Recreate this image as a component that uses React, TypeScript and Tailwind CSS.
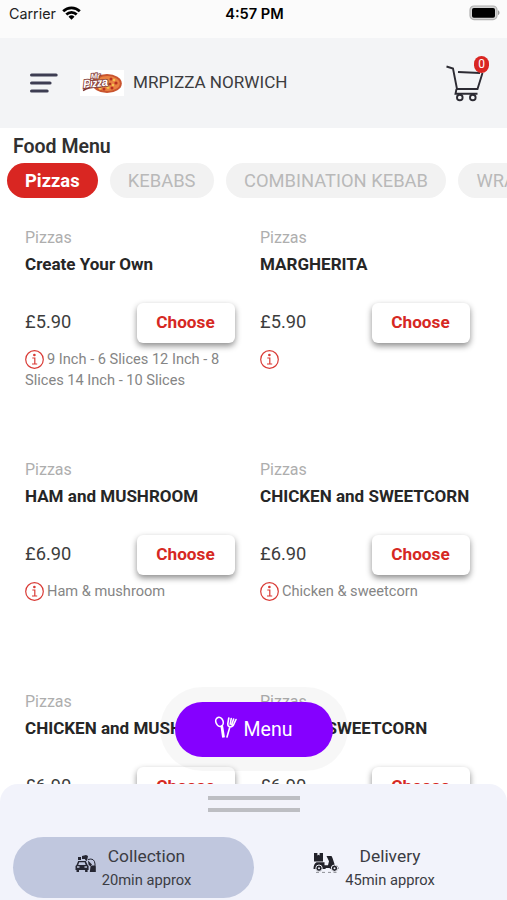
import React from "react";

const categories = ["KEBABS", "COMBINATION KEBAB", "WRAPS"];

const products = [
    { name: "Create Your Own", price: "£5.90", info: "9 Inch - 6 Slices 12 Inch - 8 Slices 14 Inch - 10 Slices" },
    { name: "MARGHERITA", price: "£5.90", info: "" },
    { name: "HAM and MUSHROOM", price: "£6.90", info: "Ham & mushroom" },
    { name: "CHICKEN and SWEETCORN", price: "£6.90", info: "Chicken & sweetcorn" },
    { name: "CHICKEN and MUSHROOM", price: "£6.90", info: "" },
    { name: "Veg and SWEETCORN", price: "£6.90", info: "" },
];

const StatusBar = () => (
    <div className="flex h-[38px] shrink-0 items-start justify-between bg-[#fbfbfb] pl-[9px] pr-[7px] text-black font-['Inter',sans-serif]">
        <div className="flex w-[120px] items-center gap-[6px] pt-[4px]">
            <span className="text-[14.3px] leading-5 text-[#222]">Carrier</span>
            <svg className="h-[14px] w-[19px] -mt-[2px]" viewBox="0 0 19 14" fill="none" stroke="#000" strokeWidth="2.7">
                <path d="M1.2 5.2a11.8 11.8 0 0 1 16.6 0" />
                <path d="M4.3 8.5a7.4 7.4 0 0 1 10.4 0" />
                <path d="M9.5 13.8l-3-3.1a4.3 4.3 0 0 1 6 0z" fill="#000" stroke="none" />
            </svg>
        </div>
        <span className="pt-[4px] text-[14.6px] font-semibold leading-5">4:57 PM</span>
        <div className="flex w-[120px] justify-end pt-[5px]">
            <svg className="h-4 w-[31px]" viewBox="0 0 31 16">
                <rect x="1" y="1" width="27" height="13.6" rx="4" fill="#d5d5d5" stroke="#b0b0b0" strokeWidth="1.2" />
                <rect x="3" y="3" width="23" height="9.8" rx="1.8" fill="#000" />
                <path d="M29 5.2c2 .8 2 4 0 4.8z" fill="#999" />
            </svg>
        </div>
    </div>
);

const Logo = () => (
    <svg className="ml-[22px] h-[26px] w-11 bg-white" viewBox="0 0 44 26">
        <ellipse cx="27" cy="13.5" rx="14.8" ry="9.5" fill="#c9542f" />
        <ellipse cx="27.5" cy="13.5" rx="12.3" ry="7.6" fill="#e98242" />
        <g fill="#b83220">
            <circle cx="31" cy="9" r="1.5" /><circle cx="36" cy="13" r="1.6" />
            <circle cx="32" cy="18" r="1.5" /><circle cx="24" cy="19" r="1.5" />
            <circle cx="30" cy="14" r="1.3" />
        </g>
        <g fill="#f5c44f">
            <circle cx="34" cy="10" r="1.3" /><circle cx="28" cy="17.5" r="1.4" />
            <circle cx="33" cy="15" r="1.2" /><circle cx="20" cy="18.5" r="1.3" />
        </g>
        <path d="M3 20.5Q12 15.5 21 17" fill="none" stroke="#7e3430" strokeWidth="1.6" />
        <g fontFamily="Liberation Sans, sans-serif" fontWeight="700" fontStyle="italic" fill="#fff" stroke="#8a4540" paintOrder="stroke" strokeWidth="1.8">
            <text x="11" y="9" fontSize="7.5" transform="rotate(-5 11 9)">Mr</text>
            <text x="3.5" y="18" fontSize="11.5" textLength="25" transform="rotate(-5 3 17)">Pizza</text>
        </g>
    </svg>
);

const Cart = () => (
    <div className="relative mb-[5px] ml-auto h-[50px] w-[46px]">
        <svg className="h-[50px] w-[46px]" viewBox="0 0 46 50" fill="none" stroke="#2c2b33" strokeWidth="1.9">
            <path d="M1.5 10.5l6.5 2 4 20.5h20.5l5-16" />
            <path d="M13 16l22 1" />
            <path d="M11.5 33l-1 4.8h22" />
            <circle cx="14.8" cy="41.5" r="2.8" />
            <circle cx="27.8" cy="41.5" r="2.8" />
        </svg>
        <span className="absolute left-[29px] top-0 flex h-[17px] w-[15px] items-center justify-center rounded-full bg-[#d92622] text-[12px] text-white">0</span>
    </div>
);

const Header = () => (
    <header className="flex h-[90px] shrink-0 items-center bg-[#f3f4f6] pl-[29px] pr-[16px]">
        <svg className="h-5 w-[29px]" viewBox="0 0 29 20" stroke="#3d3d52" strokeWidth="3.2" strokeLinecap="round">
            <path d="M2.6 2h24.5M2.6 10H21M2.6 18h15.5" />
        </svg>
        <Logo />
        <h1 className="mb-[1px] ml-[9px] text-[17.1px] text-[#3c3c3f]">MRPIZZA NORWICH</h1>
        <Cart />
    </header>
);

const InfoIcon = () => (
    <svg className="mr-[3px] inline-block h-[19px] w-[19px] align-[-5px]" viewBox="0 0 19 19" fill="none" stroke="#d93a35" strokeWidth="1.2">
        <circle cx="9.5" cy="9.5" r="8.8" />
        <path d="M7.3 8h2.5v5.8M7 14h5.2" />
        <circle cx="9.4" cy="5" r=".7" fill="#d93a35" />
    </svg>
);

const ProductCard = (props: any) => {
    const { name, price, info } = props.product;

    return (
        <div className="h-[232px] w-[235px] shrink-0">
            <p className="text-[16px] leading-5 text-[#aeaeae]">Pizzas</p>
            <h3 className="mt-[6px] whitespace-nowrap text-[17.05px] font-bold leading-5 text-[#262626]">{name}</h3>
            <div className="mt-[29px] flex h-10 w-[210px] items-center justify-between">
                <span className="pb-[2px] text-[18.3px] text-[#3d3d3d]">{price}</span>
                <button className="h-10 w-[98px] rounded-md bg-white pr-px text-[17.2px] font-bold text-[#d62823] shadow-[0_3px_6px_rgba(0,0,0,0.45)]">
                    Choose
                </button>
            </div>
            <p className="mt-[6px] w-[205px] text-[14.6px] leading-[21px] text-[#858585]">
                <InfoIcon />
                {info}
            </p>
        </div>
    );
};

const MenuButton = () => (
    <div className="absolute left-[160px] top-[687px] rounded-full bg-black/[0.03] px-[15px] pb-[14px] pt-[15px]">
        <button className="flex h-[55px] w-[158px] items-center justify-center gap-[7px] rounded-full bg-[#8500ff] pr-[2px] text-[19.5px] text-white">
            <svg className="-mt-[5px] h-[23px] w-[23px]" viewBox="0 0 23 23" fill="none" stroke="#fff" strokeWidth="1.6" strokeLinecap="round">
                <ellipse cx="5.5" cy="5.8" rx="3.6" ry="4.7" transform="rotate(-20 5.5 5.8)" />
                <path d="M7.3 10.3l1.5 10.7M8.4 10.3l1.7 10.5" />
                <path d="M14.8 2l-1 5.5q-.2 3 2.2 3.3 2.8.2 3.8-2.6L22 3.5M17.2 2.6l-1 5.6M19.6 3.1l-1.8 5.5M16 10.5l-3 10.5" />
            </svg>
            Menu
        </button>
    </div>
);

const CarIcon = () => (
    <svg className="h-[19px] w-[22px]" viewBox="0 0 22 19" fill="#252632">
        <path d="M3 3h3v3H3zM7 2l4-1v4H7zM11 1l2 1-1 5-2-1z" />
        <path fillRule="evenodd" d="M3.2 7h7.6l1.8 4 1 1v4h-1v2h-2.5v-2H4v2H1.5v-2h-1v-4l1-1zM4.2 8.3L3.2 11h7.5l-1-2.7zM2 12.3v1.4h2.5v-1.4zM9.5 12.3v1.4H12v-1.4z" />
        <path d="M13 5.5q6.5-2 7 4.5v3" fill="none" stroke="#252632" strokeWidth="1" />
        <path d="M13 6.5l4 4-1.5 2-2-2z" />
        <path d="M15.5 12.5l1.5-1h3l.8 1.5v5h-6z" />
    </svg>
);

const ScooterIcon = () => (
    <svg className="h-[22px] w-[26px]" viewBox="0 0 26 22" fill="#22222a">
        <path fillRule="evenodd" d="M1 1h9v8.4H1zM4.4 1v2.4l1.1-.7 1.1.7V1z" />
        <path d="M13.5 4h5l1 2 2.3 7q3.7 0 3.7 4h-8l-1-1h-4q0 1 .5 1H.5q0-5 3-6.8h8v3h3.5l1-4z" />
        <g stroke="#f2f3fb" strokeWidth="1">
            <circle cx="6" cy="16.2" r="3.2" />
            <circle cx="21.5" cy="16.2" r="3.2" />
        </g>
        <g fill="#f2f3fb">
            <circle cx="6" cy="16.2" r="1" />
            <circle cx="21.5" cy="16.2" r="1" />
        </g>
        <path d="M3 20.4h3M9 20.4h3M15 20.4h3M20.5 20.4h3" stroke="#77777d" strokeWidth=".8" />
    </svg>
);

const OrderType = (props: any) => (
    <button className={`flex h-[61px] w-[241px] items-center justify-center rounded-full pr-px text-[#3b3c43] ${props.active ? "bg-[#c0c7de]" : ""}`}>
        <span className={props.active ? "-mt-[9px] pr-[5px]" : "-mt-[9px] mr-[4px] pr-[2px]"}>{props.icon}</span>
        <span className="flex flex-col items-center">
            <span className="text-[17.4px] leading-6">{props.title}</span>
            <span className="text-[14.7px] leading-6">{props.time}</span>
        </span>
    </button>
);

const BottomSheet = () => (
    <div className="absolute bottom-0 left-0 h-[116px] w-full rounded-t-[18px] bg-[#f2f3fb]">
        <div className="mx-auto mt-[12px] flex w-[92px] flex-col gap-2">
            <div className="h-1 bg-[#bdbec3]"></div>
            <div className="h-1 bg-[#bdbec3]"></div>
        </div>
        <div className="mt-[25px] flex pl-[13px]">
            <OrderType active icon={<CarIcon />} title="Collection" time="20min approx" />
            <OrderType icon={<ScooterIcon />} title="Delivery" time="45min approx" />
        </div>
    </div>
);

export default function App() {
    return (
        <div className="relative flex h-[900px] w-[507px] flex-col overflow-hidden bg-white font-['Roboto',sans-serif]">
            <StatusBar />
            <Header />
            <main className="flex-1 overflow-hidden">
                <h2 className="ml-[13px] mt-[5px] text-[19.5px] font-semibold leading-7 text-[#303030]">Food Menu</h2>
                <nav className="ml-[7px] mt-[2px] flex gap-3 whitespace-nowrap text-[18.35px] leading-[35px]">
                    <span className="shrink-0 rounded-full bg-[#d92622] px-[18px] font-bold text-white">Pizzas</span>
                    {categories.map((c) => (
                        <span key={c} className="shrink-0 rounded-full bg-[#f2f2f2] px-[18.25px] text-[#b9b9b9]">{c}</span>
                    ))}
                </nav>
                <div className="ml-[25px] mt-[30px] flex w-[470px] flex-wrap">
                    {products.map((p) => (
                        <ProductCard key={p.name} product={p} />
                    ))}
                </div>
            </main>
            <MenuButton />
            <BottomSheet />
        </div>
    );
}
